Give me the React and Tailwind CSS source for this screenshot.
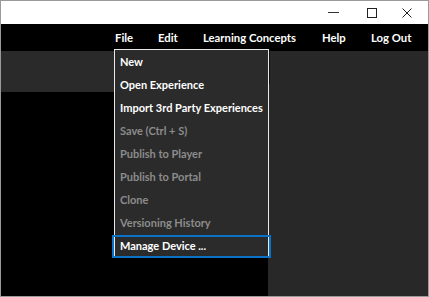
const menuItems = [
  { label: "New", enabled: true },
  { label: "Open Experience", enabled: true },
  { label: "Import 3rd Party Experiences", enabled: true },
  { label: "Save (Ctrl + S)", enabled: false },
  { label: "Publish to Player", enabled: false },
  { label: "Publish to Portal", enabled: false },
  { label: "Clone", enabled: false },
  { label: "Versioning History", enabled: false },
];

const topMenu = [
  { label: "File", w: "w-[43px]" },
  { label: "Edit", w: "w-[45px]" },
  { label: "Learning Concepts", w: "w-[119px]" },
  { label: "Help", w: "w-[49px]" },
  { label: "Log Out", w: "w-[57px]" },
];

const App = () => {
  return (
    <div className="w-[429px] h-[297px] border border-[#9a9a9a] flex flex-col bg-black font-['Lato',sans-serif] relative overflow-hidden">
      {/* title bar */}
      <div className="h-[23px] shrink-0 bg-white flex justify-end items-center text-[#222]">
        <div className="w-[11px] h-[10px] shrink-0 mr-[28px] flex flex-col justify-center">
          <div className="w-full border-t-[1.5px] border-[#333]"></div>
        </div>
        <svg width="10" height="10" viewBox="0 0 10 10" className="shrink-0 mr-[25px]">
          <rect x="0.5" y="0.5" width="9" height="9" fill="none" stroke="currentColor" strokeWidth="1" />
        </svg>
        <svg width="10" height="10" viewBox="0 0 10 10" className="shrink-0 mr-[16px]">
          <path d="M0.5 0.5 L9.5 9.5 M9.5 0.5 L0.5 9.5" stroke="currentColor" strokeWidth="1" />
        </svg>
      </div>
      {/* menu bar */}
      <div className="h-[27px] shrink-0 bg-black flex items-center pl-[114px] pt-[1px] text-white text-[11.3px] font-bold whitespace-nowrap">
        {topMenu.map((m) => (
          <div key={m.label} className={m.w}>{m.label}</div>
        ))}
      </div>
      {/* body */}
      <div className="flex-1 flex">
        <div className="w-[267px] flex flex-col">
          <div className="h-[41px] bg-[#2a2a2a]"></div>
          <div className="flex-1 bg-black"></div>
        </div>
        <div className="flex-1 bg-[#282828] flex">
          <div className="w-[2px] h-[33px] bg-[#111]"></div>
        </div>
      </div>
      {/* file dropdown */}
      <div className="absolute left-[113px] top-[48px] w-[155px] border border-[#e8e8e8] bg-[#2b2b2b] text-[11px] font-bold pt-[1px] whitespace-nowrap">
        {menuItems.map((it) => (
          <div key={it.label} className={`h-[23px] flex items-center pl-[5px] ${it.enabled ? "text-white" : "text-[#8c8c8c]"}`}>
            {it.label}
          </div>
        ))}
        <div className="h-[23px] flex items-center text-white -mx-[3px] mb-[-1px] border-2 border-[#0a73c8] pl-[6px]">
          Manage Device ...
        </div>
      </div>
    </div>
  );
};

export default App;
